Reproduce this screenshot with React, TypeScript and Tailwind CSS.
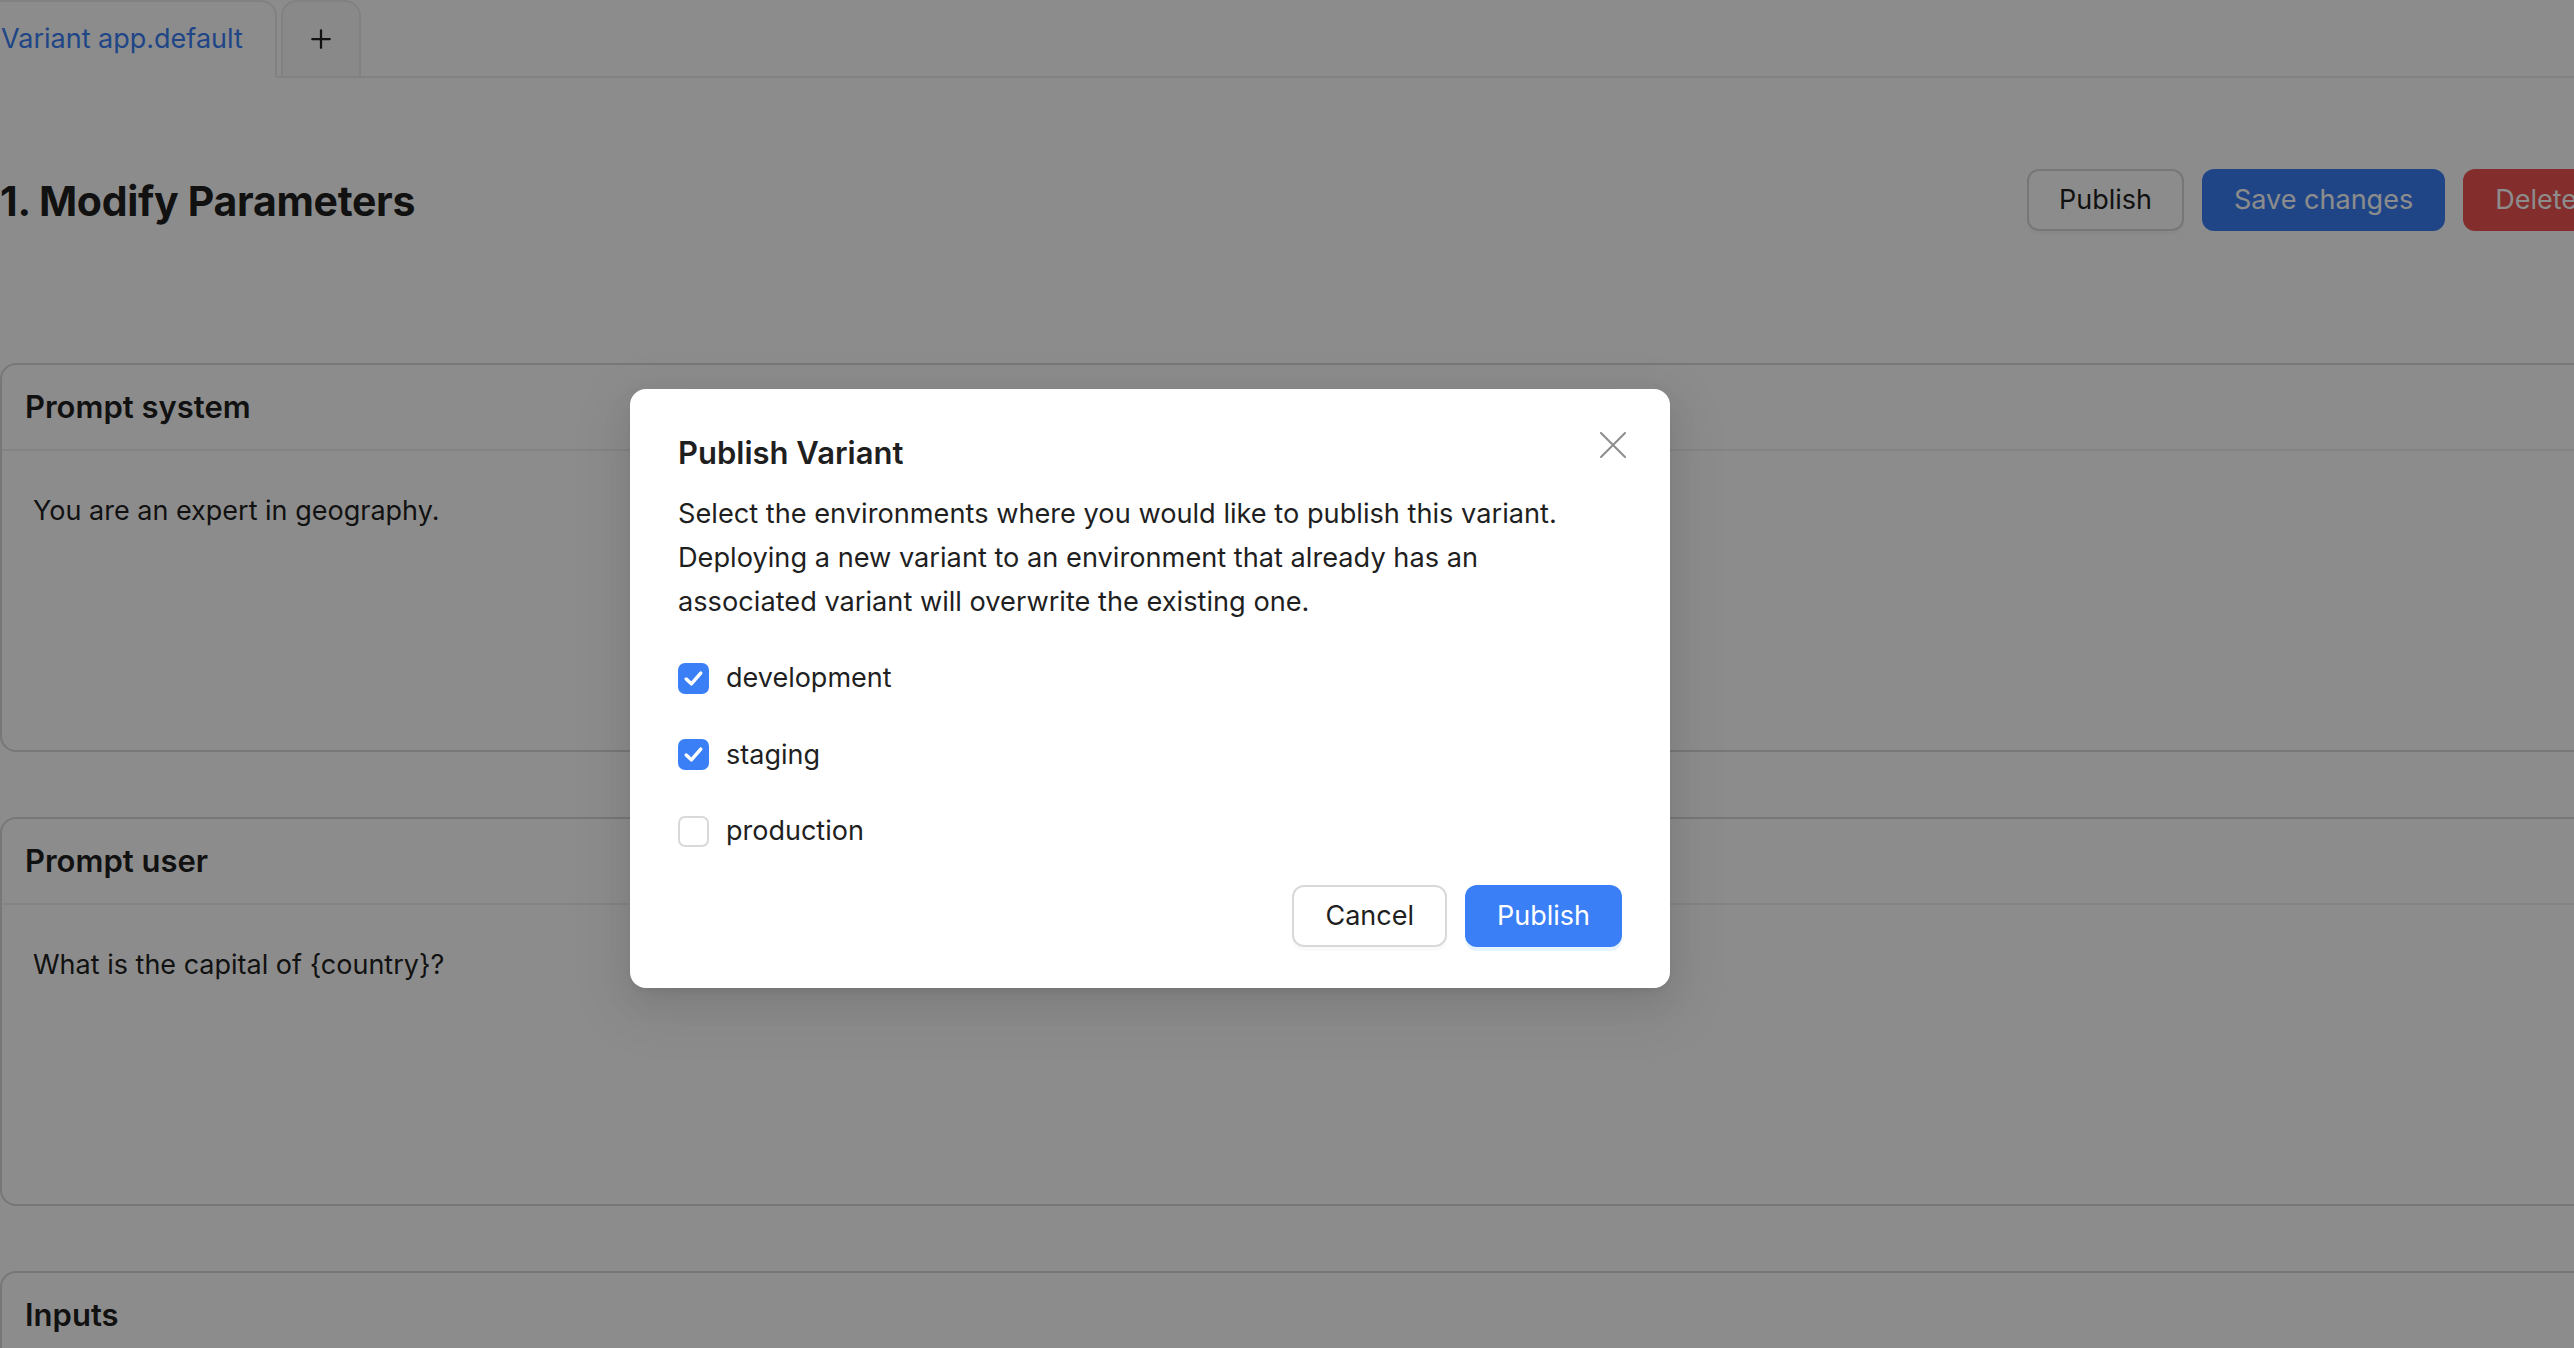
import { Plus } from "lucide-react";

const envs = [
  { name: "development", checked: true },
  { name: "staging", checked: true },
  { name: "production", checked: false },
];

const PromptCard = ({ title, text }: { title: string; text: string }) => {
  return (
    <div className="mb-[65px] rounded-[16px] border-2 border-[#d9d9d9] bg-white">
      <div className="flex h-[86px] items-center border-b-2 border-[#f0f0f0] px-[23px]">
        <h3 className="text-[31px] font-semibold text-[#1f1f1f]">{title}</h3>
      </div>
      <div className="h-[299px] px-[31px] pt-[38px]">
        <p className="text-[27px] leading-[44px] text-[#1f1f1f]">{text}</p>
      </div>
    </div>
  );
};

const CheckBox = ({ checked }: { checked: boolean }) => {
  if (checked) {
    return (
      <span className="flex h-[31px] w-[31px] items-center justify-center rounded-[7px] bg-[#3a7ff6]">
        <svg width="31" height="31" viewBox="0 0 32 32" fill="none">
          <path d="M8.5 16.5 L13.8 21.5 L23.5 10.5" stroke="white" strokeWidth="3.6" strokeLinecap="round" strokeLinejoin="round" />
        </svg>
      </span>
    );
  }
  return <span className="block h-[31px] w-[31px] rounded-[7px] border-2 border-[#d9d9d9] bg-white" />;
};

export default function App() {
  return (
    <div className="relative h-[1348px] w-[2574px] overflow-hidden bg-white font-['Inter',sans-serif] text-[#1f1f1f]">
      <div className="w-[2609px]">
        {/* tabs */}
        <div className="flex h-[78px] items-end border-b-2 border-[#ebebeb]">
          <div className="-mb-[2px] ml-[-33px] flex h-[78px] items-center rounded-t-[16px] border-2 border-[#ebebeb] border-b-white bg-white px-[32px]">
            <span className="text-[27px] text-[#3a7ff6]">Variant app.default</span>
          </div>
          <div className="-mb-[2px] ml-[4px] flex h-[78px] w-[80px] items-center justify-center rounded-t-[16px] border-2 border-[#ebebeb] bg-[#fafafa]">
            <Plus size={30} strokeWidth={1.8} className="text-[#1f1f1f]" />
          </div>
        </div>

        <div className="mt-[91px] flex h-[62px] items-center">
          <h1 className="mt-[4px] text-[41px] font-bold tracking-[-0.3px] text-[#1f1f1f]">1. Modify Parameters</h1>
          <div className="ml-auto flex gap-[18px]">
            <button className="h-[62px] rounded-[12px] border-2 border-[#d9d9d9] bg-white px-[30px] text-[27px] text-[#1f1f1f] shadow-[0_4px_0_rgba(0,0,0,0.02)]">
              Publish
            </button>
            <button className="h-[62px] rounded-[12px] bg-[#3a7ff6] px-[32px] text-[27px] text-white">
              Save changes
            </button>
            <button className="h-[62px] rounded-[12px] bg-[#ef5350] px-[32px] text-[27px] text-white">
              Delete
            </button>
          </div>
        </div>

        <div className="mt-[132px]">
          <PromptCard title="Prompt system" text="You are an expert in geography." />
          <PromptCard title="Prompt user" text="What is the capital of {country}?" />
          <div className="rounded-[16px] border-2 border-[#d9d9d9] bg-white">
            <div className="flex h-[86px] items-center border-b-2 border-[#f0f0f0] px-[23px]">
              <h3 className="text-[31px] font-semibold text-[#1f1f1f]">Inputs</h3>
            </div>
            <div className="h-[200px]" />
          </div>
        </div>
      </div>

      {/* mask */}
      <div className="absolute inset-0 z-10 bg-black/45" />

      {/* modal */}
      <div className="absolute left-[630px] top-[389px] z-20 w-[1040px] rounded-[16px] bg-white px-[48px] pb-[41px] pt-[40px] shadow-[0_12px_32px_0_rgba(0,0,0,0.08),0_6px_12px_-8px_rgba(0,0,0,0.12),0_18px_56px_16px_rgba(0,0,0,0.05)]">
        <button className="absolute right-[44px] top-[43px] flex h-[26px] w-[26px] items-center justify-center">
          <svg width="26" height="26" viewBox="0 0 26 26" fill="none">
            <path d="M1 1 L25 25 M25 1 L1 25" stroke="#8c8c8c" strokeWidth="2" strokeLinecap="round" />
          </svg>
        </button>
        <h2 className="text-[31px] font-semibold leading-[48px] text-[#1f1f1f]">Publish Variant</h2>
        <p className="mt-[15px] text-[27.2px] leading-[44px] text-[#1f1f1f]">
          Select the environments where you would like to publish this variant.
          <br />
          Deploying a new variant to an environment that already has an
          <br />
          associated variant will overwrite the existing one.
        </p>
        <div className="mt-[32px] flex flex-col gap-[32.5px]">
          {envs.map((env) => (
            <label key={env.name} className="flex h-[44px] items-center gap-[17px]">
              <CheckBox checked={env.checked} />
              <span className="text-[27px] leading-[44px] text-[#1f1f1f]">{env.name}</span>
            </label>
          ))}
        </div>
        <div className="mt-[32px] flex justify-end gap-[18px]">
          <button className="h-[62px] rounded-[12px] border-2 border-[#d9d9d9] bg-white px-[31px] text-[27px] text-[#1f1f1f] shadow-[0_4px_0_rgba(0,0,0,0.02)]">
            Cancel
          </button>
          <button className="h-[62px] rounded-[12px] bg-[#3a7ff6] px-[32px] text-[27px] text-white shadow-[0_4px_0_rgba(5,145,255,0.1)]">
            Publish
          </button>
        </div>
      </div>
    </div>
  );
}
